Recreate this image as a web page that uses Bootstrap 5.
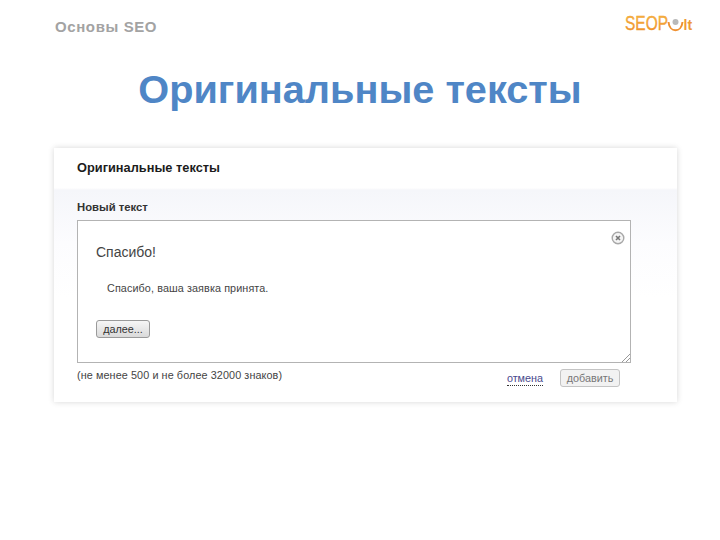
<!DOCTYPE html>
<html lang="en">
<head>
    <meta charset="UTF-8">
    <title>Оригинальные тексты</title>
    <link href="https://cdn.jsdelivr.net/npm/bootstrap@5.3.3/dist/css/bootstrap.min.css" rel="stylesheet">
    <style>
        body {
          background: #fff;
          font-family: "Liberation Sans", Arial, sans-serif;
          color: #222;
        }

        .slide {
          width: 720px;
          height: 540px;
          overflow: hidden;
        }

        .slide-head {
          height: 40px;
          padding: 12px 27px 0 55px;
        }

        .slide-sub {
          font-size: 15px;
          line-height: 30px;
          font-weight: 700;
          letter-spacing: .6px;
          color: #a3a3a3;
        }

        .slide-title {
          font-size: 39.7px;
          line-height: 42px;
          font-weight: 700;
          color: #4f86c6;
          text-align: center;
          margin: 28px 0 38px;
        }

        .panel {
          width: 623px;
          height: 254px;
          margin-left: 54px;
          box-shadow: 0 0 6px rgba(0,0,0,.16);
          background: linear-gradient(#fff 0, #fff 40px, #f5f6fa 42px, #fcfcfe 95px, #fff 150px);
        }

        .panel-title {
          font-size: 12.8px;
          font-weight: 700;
          line-height: 16px;
          padding: 12px 0 0 23px;
          height: 52px;
          color: #1c1c1c;
        }

        .panel-label {
          font-size: 11.3px;
          font-weight: 700;
          line-height: 14px;
          padding-left: 23px;
          color: #333;
          height: 20px;
        }

        .fake-area {
          position: relative;
          width: 554px;
          height: 143px;
          margin-left: 23px;
          background: #fff;
          border: 1px solid #b3b3b3;
          padding: 23px 18px 0;
        }

        .thanks-head {
          font-size: 14px;
          line-height: 16px;
          color: #444;
        }

        .thanks-text {
          font-size: 10.8px;
          line-height: 14px;
          color: #444;
          padding: 21px 0 0 11px;
          letter-spacing: .1px;
        }

        .next-btn {
          display: block;
          width: 54px;
          height: 18px;
          margin-top: 25px;
          padding: 0;
          font-size: 10.8px;
          line-height: 15px;
          color: #333;
          border: 1px solid #9a9a9a;
          border-radius: 3px;
          background: linear-gradient(#f6f6f6, #dadada);
        }

        .close-mark {
          position: absolute;
          top: 10px;
          right: 5px;
        }

        .grip {
          position: absolute;
          right: 0;
          bottom: 0;
        }

        .panel-foot {
          padding: 6px 57px 0 23px;
        }

        .limit-text {
          font-size: 10.8px;
          line-height: 12px;
          color: #444;
          letter-spacing: .1px;
        }

        .cancel-link {
          font-size: 10.8px;
          line-height: 13px;
          color: #4a4a8c;
          text-decoration: none;
          border-bottom: 1px dotted #333;
          margin: 3px 17px 0 0;
        }

        .add-btn {
          width: 60px;
          height: 18px;
          padding: 0;
          font-size: 10.8px;
          line-height: 15px;
          color: #777;
          border: 1px solid #c4c4c4;
          border-radius: 3px;
          background: #f2f2f2;
        }

        .logo-word {
          font-family: "Liberation Sans", Arial, sans-serif;
          font-size: 21px;
          stroke: #f0a030;
          stroke-width: .4px;
        }

        .logo-tail {
          font-family: "Liberation Sans", Arial, sans-serif;
          font-size: 14px;
          font-weight: 700;
        }
    </style>
</head>
<body>

<div class="slide">
    <!-- Header -->
    <div class="slide-head d-flex justify-content-between align-items-start">
        <div class="slide-sub">Основы SEO</div>
        <svg width="68" height="22" viewBox="0 0 68 22">
            <defs>
                <linearGradient id="orange" x1="0" y1="0" x2="0" y2="1">
                    <stop offset="0" stop-color="#f9c24a"/>
                    <stop offset="1" stop-color="#ee8428"/>
                </linearGradient>
            </defs>
            <text x="0" y="18" class="logo-word" fill="url(#orange)" textLength="43" lengthAdjust="spacingAndGlyphs">SEOP</text>
            <path d="M43.5 10c1 11 13 11 14 0" fill="none" stroke="#ef9030" stroke-width="2"/>
            <circle cx="50.5" cy="10" r="3" fill="#b9b9b9"/>
            <text x="58.5" y="18" class="logo-tail" fill="#ee9a35">lt</text>
        </svg>
    </div>

    <h1 class="slide-title">Оригинальные тексты</h1>

    <!-- Screenshot panel -->
    <div class="panel">
        <div class="panel-title">Оригинальные тексты</div>
        <div class="panel-label">Новый текст</div>
        <div class="fake-area">
            <div class="thanks-head">Спасибо!</div>
            <div class="thanks-text">Спасибо, ваша заявка принята.</div>
            <button class="next-btn">далее...</button>
            <svg class="close-mark" width="14" height="14" viewBox="0 0 14 14">
                <circle cx="7" cy="7" r="5.8" fill="#f4f4f4" stroke="#a8a8a8" stroke-width="1.4"/>
                <path d="M5 5l4 4M9 5l-4 4" stroke="#777" stroke-width="1.6"/>
            </svg>
            <svg class="grip" width="9" height="9" viewBox="0 0 9 9">
                <path d="M1 9L9 1M5 9l4-4" stroke="#999" stroke-width="1"/>
            </svg>
        </div>
        <div class="panel-foot d-flex align-items-start">
            <div class="limit-text flex-grow-1">(не менее 500 и не более 32000 знаков)</div>
            <a href="#" class="cancel-link">отмена</a>
            <button class="add-btn">добавить</button>
        </div>
    </div>
</div>

<script src="https://cdn.jsdelivr.net/npm/bootstrap@5.3.3/dist/js/bootstrap.bundle.min.js"></script>
</body>
</html>
